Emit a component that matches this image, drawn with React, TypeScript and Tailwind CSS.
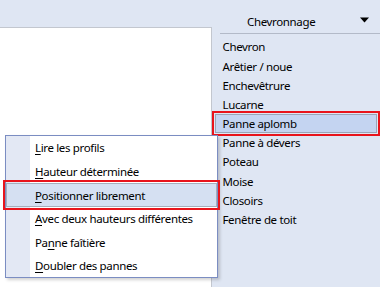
import React from "react";

const rightItems = [
  "Chevron",
  "Arêtier / noue",
  "Enchevêtrure",
  "Lucarne",
  "Panne aplomb",
  "Panne à dévers",
  "Poteau",
  "Moise",
  "Closoirs",
  "Fenêtre de toit",
];

type MenuItem = { pre: string; key: string; post: string };
const menuItems: MenuItem[] = [
  { pre: "", key: "L", post: "ire les profils" },
  { pre: "", key: "H", post: "auteur déterminée" },
  { pre: "", key: "P", post: "ositionner librement" },
  { pre: "", key: "A", post: "vec deux hauteurs différentes" },
  { pre: "Pa", key: "n", post: "ne faîtière" },
  { pre: "", key: "D", post: "oubler des pannes" },
];

export default function App() {
  return (
    <div className="relative w-[380px] h-[287px] overflow-hidden bg-[#dfe6f3] flex text-black text-[11.5px] tracking-[-0.35px] font-['Noto_Sans',sans-serif]">
      {/* left panel */}
      <div className="w-[212px] pt-[27px] flex flex-col">
        <div className="flex-1 bg-white border-t border-r border-[#c3c7cf]" />
      </div>

      {/* right column */}
      <div className="flex-1 flex flex-col">
        <div className="ml-[8px] h-[34px] border-b border-[#b3bac8] flex items-start">
          <span className="pl-[27px] pt-[14px] leading-[16px]">Chevronnage</span>
          <svg className="ml-auto mr-[11px] mt-[17px]" width="9" height="6" viewBox="0 0 9 6">
            <path d="M0 0.5 H9 L4.5 5.5 Z" fill="#000" />
          </svg>
        </div>
        <div className="mt-[3.4px] flex flex-col">
          {rightItems.map((t) =>
            t === "Panne aplomb" ? (
              <div
                key={t}
                className="h-[19.2px] mx-[3px] flex items-center pl-[6.5px] bg-[#c4d4f1] border border-[#9ba5b7] outline-2 outline-[#e8141c] outline-offset-[1px]"
              >
                {t}
              </div>
            ) : (
              <div key={t} className="h-[19.2px] mx-[3px] flex items-center pl-[7.5px]">
                {t}
              </div>
            )
          )}
        </div>
      </div>

      {/* popup menu */}
      <div className="absolute left-[5px] top-[135px] w-[213px] h-[143px] bg-white border border-[#7b8dc2] shadow-[2px_2px_3px_rgba(0,0,0,0.18)]">
        <div className="absolute left-0 top-0 bottom-0 w-[24px] bg-[#e3e8f4]" />
        <div className="relative flex flex-col">
          {menuItems.map((m, i) => {
            const label = (
              <span>
                {m.pre}
                <u className="underline-offset-2">{m.key}</u>
                {m.post}
              </span>
            );
            return i === 2 ? (
              <div
                key={i}
                className="h-[23.66px] flex items-center pl-[28px] bg-[#d5e0f2] border border-[#a6aebc] outline-2 outline-[#e8141c] outline-offset-[1px]"
              >
                {label}
              </div>
            ) : (
              <div key={i} className="h-[23.66px] flex items-center pl-[29px]">
                {label}
              </div>
            );
          })}
        </div>
      </div>
    </div>
  );
}
